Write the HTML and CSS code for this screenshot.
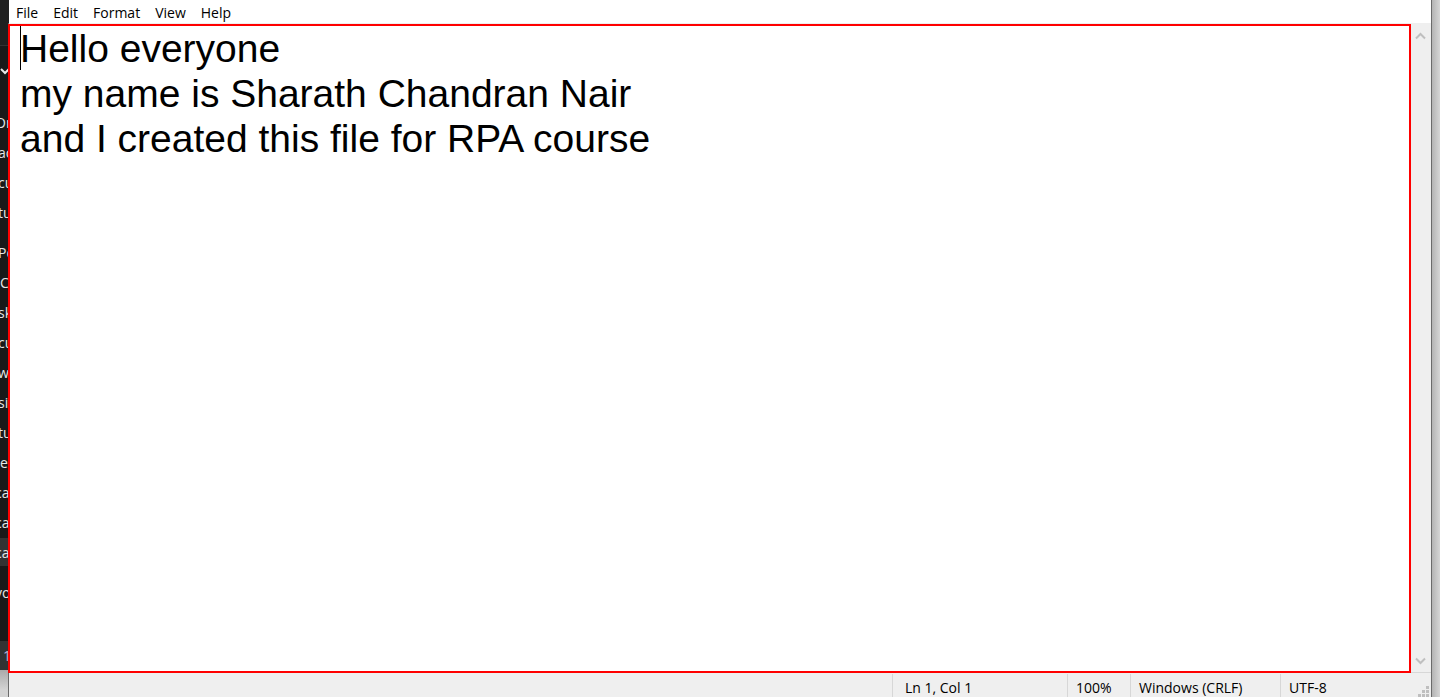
FILE: index.html
```html
<!DOCTYPE html>
<html lang="en">
<head>
<meta charset="utf-8">
<title>Notepad</title>
<link rel="stylesheet" href="styles.css">
</head>
<body>
<div class="desktop">
  <aside class="behind">
    <div class="behind-head">
      <svg width="8" height="8" viewBox="0 0 8 8" fill="none" stroke="#e8e8e8" stroke-width="2"><path d="M1 2l4 4 4-4"/></svg>
    </div>
    <ul class="places">
      <li class="cut">On</li><li>ac</li><li>cu</li><li>tu</li>
    </ul>
    <ul class="places">
      <li>Po</li><li class="inset">C</li><li>sk</li><li>cu</li><li>w</li><li>si</li><li>tu</li><li class="inset">e</li><li class="cut">ca</li><li class="cut">ca</li><li class="cut selected">ca</li>
    </ul>
    <ul class="places"><li class="cut">vo</li></ul>
    <div class="behind-foot">1</div>
  </aside>
  <main class="window">
    <nav class="menu">
      <button type="button">File</button>
      <button type="button">Edit</button>
      <button type="button">Format</button>
      <button type="button">View</button>
      <button type="button">Help</button>
    </nav>
    <div class="body">
      <div class="editor">
        <textarea class="text" aria-label="Text editor" spellcheck="false">Hello everyone
my name is Sharath Chandran Nair
and I created this file for RPA course</textarea>
        <span class="caret"></span>
      </div>
      <div class="scrollbar">
        <button type="button" aria-label="Scroll up"><svg width="11" height="8" viewBox="0 0 11 8" fill="none" stroke="#bfbfbf" stroke-width="2"><path d="M1 6.500l4.500-4.500 4.500 4.500"/></svg></button>
        <button type="button" aria-label="Scroll down"><svg width="11" height="8" viewBox="0 0 11 8" fill="none" stroke="#bfbfbf" stroke-width="2"><path d="M1 1.500l4.500 4.500 4.500-4.500"/></svg></button>
      </div>
    </div>
    <footer class="status">
      <span class="cell position">Ln 1, Col 1</span>
      <span class="cell zoom">100%</span>
      <span class="cell ending">Windows (CRLF)</span>
      <span class="cell encoding">UTF-8</span>
      <svg class="grip" width="11" height="11" viewBox="0 0 11 11" fill="#bfbfbf"><path d="M8 0h3v3H8zM4 4h3v3H4zM8 4h3v3H8zM0 8h3v3H0zM4 8h3v3H4zM8 8h3v3H8z"/></svg>
    </footer>
  </main>
  <div class="shade"></div>
</div>
</body>
</html>
```
FILE: styles.css
```css
* { box-sizing: border-box; }
body {
  margin: 0;
  font: 14px/20px "Open Sans", "Noto Sans", sans-serif;
  color: #000;
}
button {
  margin: 0;
  padding: 0;
  border: 0;
  background: none;
  font: inherit;
  color: inherit;
}
.desktop {
  display: grid;
  grid-template-columns: 8px minmax(0, 1fr) 8px;
  height: 100vh;
  overflow: hidden;
}
.behind {
  display: flex;
  flex-direction: column;
  overflow: hidden;
  background: linear-gradient(#191919 670px, #aaa 670px, #d4d4d4 690px);
  color: #e6e6e6;
}
.behind-head {
  height: 108px;
  padding-top: 67px;
  background: linear-gradient(#202020 45px, #333 45px, #333 46px, #191919 46px);
}
.behind-head svg { display: block; }
.places {
  list-style: none;
  margin: 0 0 10px;
  padding: 0;
}
.places li {
  height: 30px;
  line-height: 30px;
  text-indent: -2px;
  white-space: nowrap;
}
.places .cut { text-indent: -5px; }
.places .inset { text-indent: 0; }
.places .selected { background: linear-gradient(#333 28px, transparent 28px); }
.behind-foot {
  height: 29px;
  margin-top: 23px;
  padding-left: 3px;
  line-height: 29px;
  background: #333;
  color: #b9b3d6;
}
.window {
  display: flex;
  flex-direction: column;
  border: solid #6b6b6b;
  border-width: 0 1px;
  background: #efefef;
}
.menu {
  display: flex;
  gap: 15px;
  height: 23px;
  padding: 3px 7px 0;
  background: #fff;
  box-shadow: -1px 0 #202020;
}
.body {
  display: flex;
  flex: 1;
  min-height: 0;
}
.editor {
  position: relative;
  z-index: 1;
  display: flex;
  flex: 1;
  margin: 1px 0 -1px -1px;
  border: 2px solid #f00;
}
.text {
  flex: 1;
  margin: 0;
  padding: 0 10px;
  border: 0;
  outline: 0;
  resize: none;
  background: #fff;
  color: #000;
  font: 39px/45px "Liberation Sans", Arial, sans-serif;
}
.caret {
  position: absolute;
  top: 0;
  left: 10px;
  width: 1px;
  height: 44px;
  background: #000;
}
.scrollbar {
  display: flex;
  flex-direction: column;
  justify-content: space-between;
  width: 20px;
  padding: 9px 0 7px 4px;
}
.scrollbar svg { display: block; }
.status {
  display: flex;
  justify-content: flex-end;
  height: 25px;
  padding-top: 1px;
  border-top: 1px solid #d7d7d7;
}
.cell {
  padding: 4px 0 0 8px;
  border-left: 1px solid #d7d7d7;
}
.position { width: 175px; padding-left: 12px; }
.zoom { width: 63px; }
.ending { width: 150px; }
.encoding { width: 138px; }
.grip {
  align-self: flex-end;
  margin-right: 2px;
}
.shade { background: linear-gradient(90deg, #b4b4b4, #d6d6d6); }
```
